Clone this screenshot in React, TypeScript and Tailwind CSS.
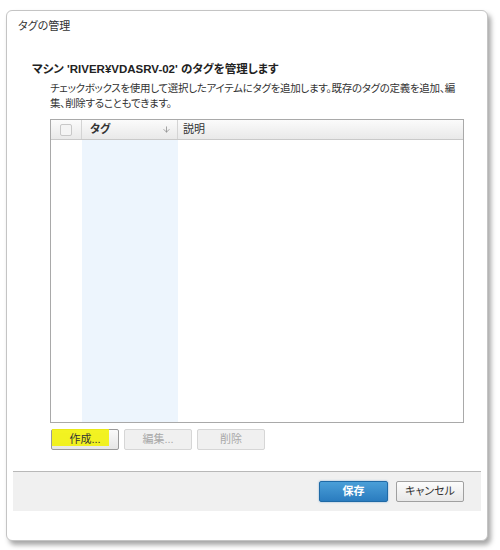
import { ArrowDown } from "lucide-react";

const jp = "font-['Liberation_Sans','Noto_Sans_CJK_JP',sans-serif] [font-feature-settings:'palt']";

function SmallButton({
  label,
  disabled = false,
  highlight = false,
}: {
  label: string;
  disabled?: boolean;
  highlight?: boolean;
}) {
  return (
    <div
      className={`relative flex h-[21px] w-[68px] items-center justify-center rounded-[2px] border text-[11px] ${
        disabled
          ? "border-[#d6d6d6] bg-[#f0f0f0] text-[#a8a8a8]"
          : "border-[#9a9a9a] bg-gradient-to-b from-[#fafafa] to-[#e6e6e6] text-[#333]"
      }`}
    >
      {highlight && (
        <div className="absolute left-0 top-[-1px] h-[17px] w-[57px] bg-[#f2f20a]/90" />
      )}
      <span className="relative">{label}</span>
    </div>
  );
}

export default function App() {
  return (
    <div className={`h-[550px] w-[500px] bg-white pl-[6px] pt-[10px] ${jp}`}>
      <div className="flex h-[531px] w-[482px] flex-col rounded-[6px] border border-[#c4c4c4] bg-white shadow-[3px_4px_5px_rgba(0,0,0,0.35)]">
        <div className="pl-[11px] pt-[8px] text-[11px] leading-[14px] text-[#333]">タグの管理</div>

        <div className="pl-[25px] pt-[28px] text-[11.5px] font-bold leading-[16px] text-[#222]">
          マシン 'RIVER¥VDASRV-02' のタグを管理します
        </div>

        <div className="pl-[43px] pr-[26px] pt-[4px] text-[10.5px] leading-[15px] tracking-[-0.3px] text-[#333]">
          チェックボックスを使用して選択したアイテムにタグを追加します。既存のタグの定義を追加、編集、削除することもできます。
        </div>

        <div className="ml-[43px] mt-[8px] flex h-[304px] w-[414px] flex-col border border-[#a9a9a9] bg-white">
          <div className="flex h-[20px] border-b border-[#c9c9c9] bg-gradient-to-b from-[#fbfbfb] to-[#e9e9e9] text-[11px] text-[#333]">
            <div className="flex w-[31px] items-center justify-center border-r border-[#d4d4d4]">
              <div className="h-[12px] w-[12px] rounded-[2px] border border-[#c8c8c8] bg-[#f4f4f4]" />
            </div>
            <div className="flex w-[96px] items-center justify-between border-r border-[#d4d4d4] pl-[8px] pr-[6px] font-bold">
              <span>タグ</span>
              <ArrowDown size={9} strokeWidth={2} className="text-[#888]" />
            </div>
            <div className="flex flex-1 items-center pl-[5px]">説明</div>
          </div>
          <div className="flex flex-1">
            <div className="w-[31px]" />
            <div className="w-[96px] bg-[#edf5fd]" />
            <div className="flex-1" />
          </div>
        </div>

        <div className="ml-[44px] mt-[6px] flex gap-[5px]">
          <SmallButton label="作成..." highlight />
          <SmallButton label="編集..." disabled />
          <SmallButton label="削除" disabled />
        </div>

        <div className="mx-[6px] mt-[21px] flex h-[40px] items-center justify-end gap-[8px] border-t border-[#b8b8b8] bg-[#f0f0f0] pr-[17px]">
          <div className="flex h-[21px] w-[69px] items-center justify-center rounded-[2px] border border-[#1f6aa6] bg-gradient-to-b from-[#4a9fd8] to-[#2a7cbf] text-[11px] font-bold text-white shadow-[0_0_2px_rgba(42,124,191,0.6)]">
            保存
          </div>
          <div className="flex h-[21px] w-[68px] items-center justify-center rounded-[2px] border border-[#a0a0a0] bg-gradient-to-b from-[#fcfcfc] to-[#e8e8e8] text-[11px] text-[#333]">
            キャンセル
          </div>
        </div>
      </div>
    </div>
  );
}
